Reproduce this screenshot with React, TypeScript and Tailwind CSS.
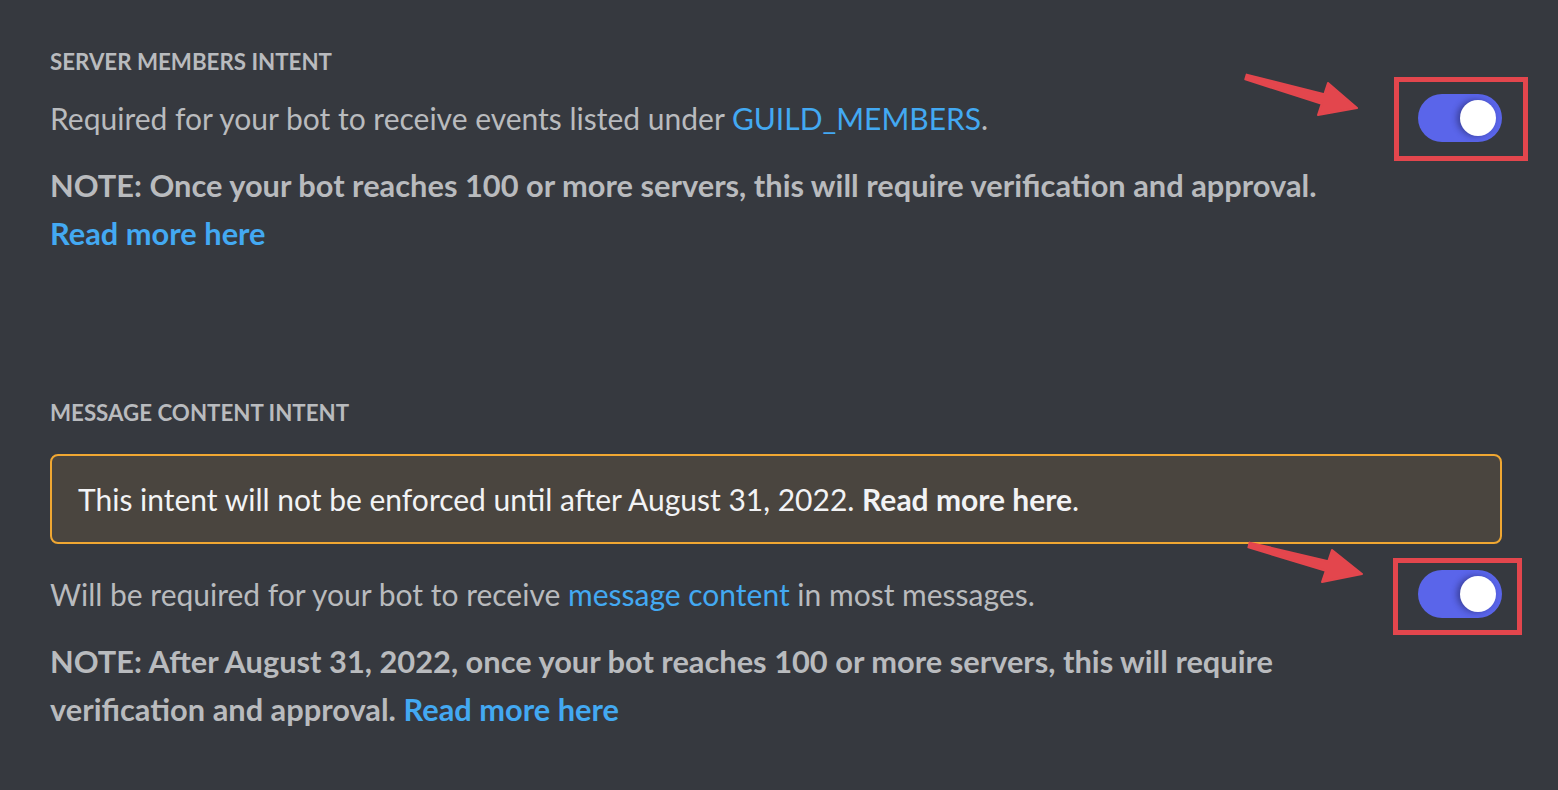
import React from 'react';

const FONT = { fontFamily: 'Lato, "Open Sans", sans-serif' };

function Toggle({ box }: { box: string }) {
  return (
    <div className="relative shrink-0">
      <span className={`absolute border-[5px] border-[#e3464d] ${box}`} />
      <div className="relative flex h-[48px] w-[84px] items-center justify-end rounded-full bg-[#5a65ea] pr-[6px]">
        <div className="h-[36px] w-[36px] rounded-full bg-white shadow-[-3px_0_6px_rgba(20,20,60,0.45)]" />
      </div>
    </div>
  );
}

function Link({ children, bold }: { children: React.ReactNode; bold?: boolean }) {
  return <span className={`text-[#43a9f2] ${bold ? 'font-bold' : ''}`}>{children}</span>;
}

export default function App() {
  return (
    <div className="relative min-h-screen w-full overflow-hidden bg-[#36393f]" style={FONT}>
      <div className="w-[1452px] pl-[50px] pt-[46px] box-content">
        {/* server members */}
        <div className="flex flex-col">
          <h3 className="h-[32px] whitespace-nowrap text-[22.3px] font-bold uppercase leading-[32px] text-[#b9bbbe]">
            Server Members Intent
          </h3>
          <div className="mt-[16px] flex h-[48px] items-center justify-between">
            <p className="whitespace-nowrap text-[30px] leading-[48px] text-[#b9bbbe]">
              Required for your bot to receive events listed under <Link>GUILD_MEMBERS</Link>.
            </p>
            <Toggle box="-left-[24px] -right-[26px] -top-[17px] -bottom-[19px]" />
          </div>
          <p className="mt-[20px] whitespace-nowrap text-[30.8px] font-bold leading-[48px] text-[#b9bbbe]">
            NOTE: Once your bot reaches 100 or more servers, this will require verification and approval.
            <br />
            <Link bold>Read more here</Link>
          </p>
        </div>

        {/* message content */}
        <div className="mt-[139px] flex flex-col">
          <h3 className="h-[32px] whitespace-nowrap text-[22.3px] font-bold uppercase leading-[32px] text-[#b9bbbe]">
            Message Content Intent
          </h3>
          <div className="mt-[25px] rounded-[8px] border-2 border-[#f0a732] bg-[#4a453f] px-[26px] py-[19px]">
            <p className="whitespace-nowrap text-[30px] leading-[48px] text-[#f2f3f5]">
              This intent will not be enforced until after August 31, 2022.{' '}
              <span className="font-bold">Read more here</span>.
            </p>
          </div>
          <div className="mt-[26px] flex h-[48px] items-center justify-between">
            <p className="whitespace-nowrap text-[30px] leading-[48px] text-[#b9bbbe]">
              Will be required for your bot to receive <Link>message content</Link> in most messages.
            </p>
            <Toggle box="-left-[25px] -right-[20px] -top-[12px] -bottom-[17px]" />
          </div>
          <p className="mt-[20px] whitespace-nowrap text-[30.8px] font-bold leading-[48px] text-[#b9bbbe]">
            NOTE: After August 31, 2022, once your bot reaches 100 or more servers, this will require
            <br />
            verification and approval. <Link bold>Read more here</Link>
          </p>
        </div>
      </div>

      {/* annotation arrows */}
      <svg className="pointer-events-none absolute left-0 top-0" width="1558" height="790">
        <polygon
          points="1246.7,74.6 1324.3,94.2 1328,83 1357,108 1318,115 1321.7,103.8 1245.3,79.4"
          fill="#e3464d"
          stroke="#e3464d"
          strokeWidth="2"
          strokeLinejoin="round"
        />
        <polygon
          points="1249.6,542.6 1328.2,561.2 1332,550 1362,574 1322,582 1325.8,570.8 1248.4,547.4"
          fill="#e3464d"
          stroke="#e3464d"
          strokeWidth="2"
          strokeLinejoin="round"
        />
      </svg>
    </div>
  );
}
